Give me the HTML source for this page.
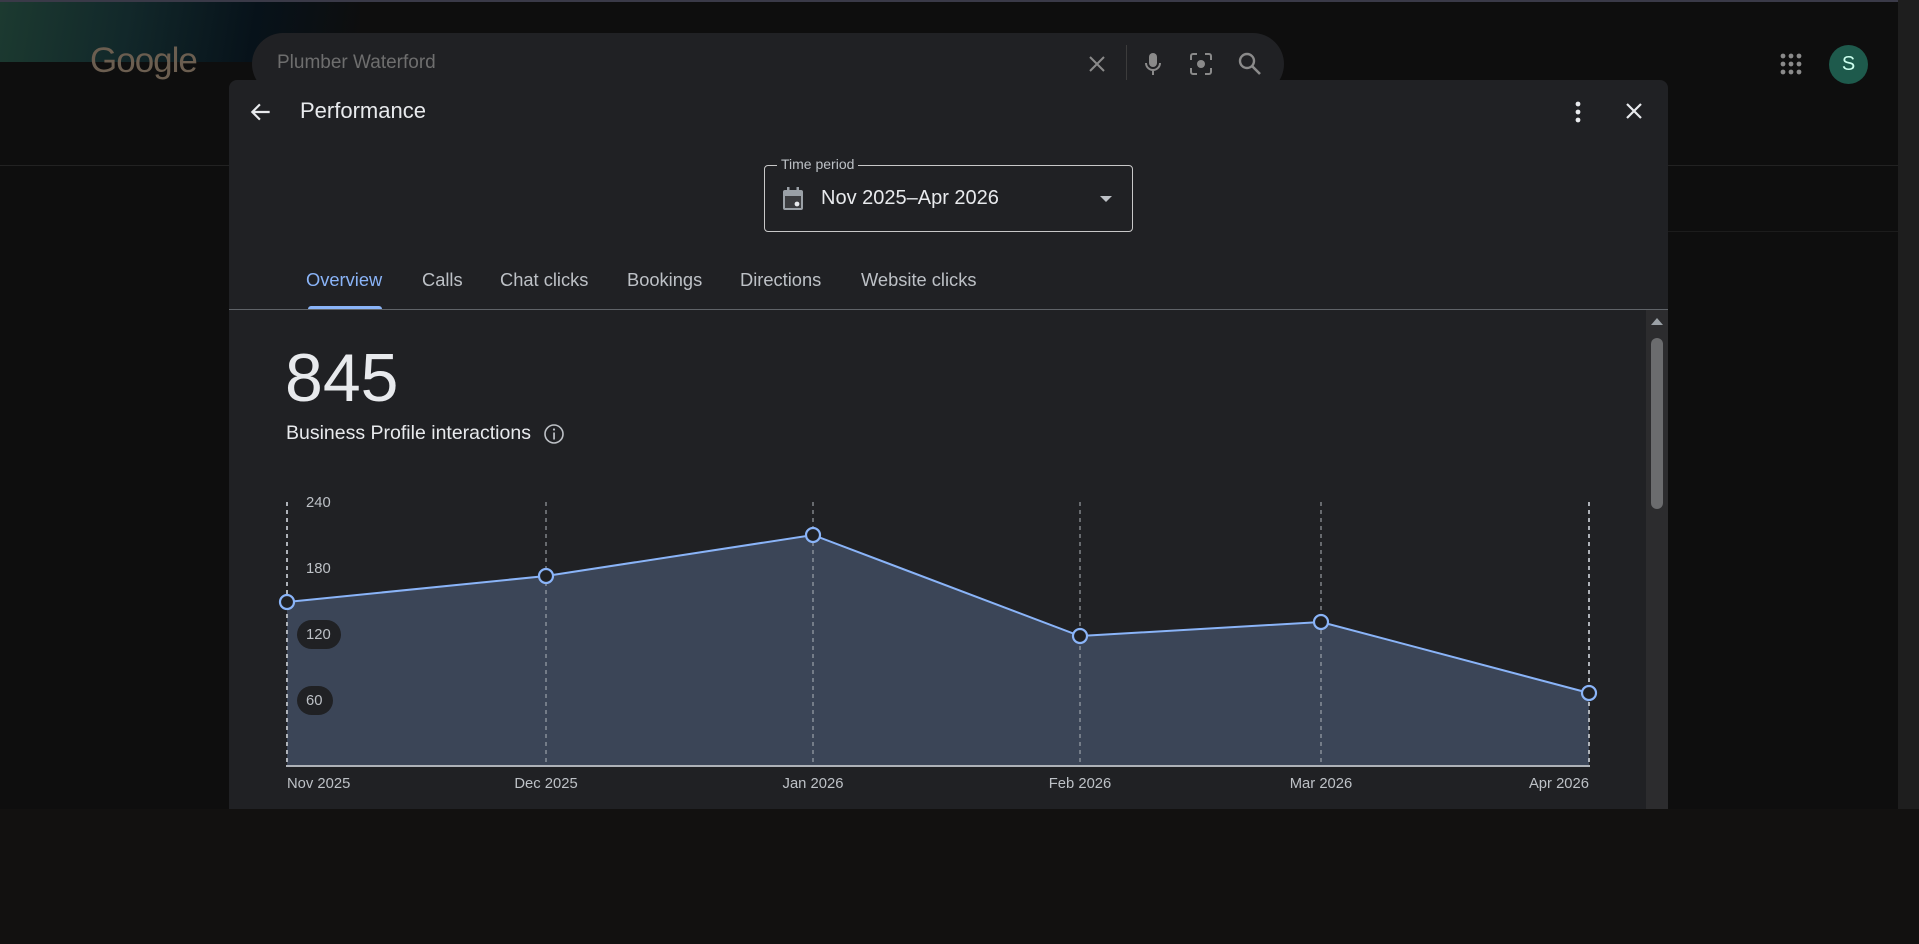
<!DOCTYPE html>
<html><head><meta charset="utf-8"><style>
*{margin:0;padding:0;box-sizing:border-box}
body{width:1919px;height:944px;background:#121110;overflow:hidden;position:relative;font-family:"Liberation Sans",Arial,sans-serif}
.top{position:absolute;left:0;top:0;width:1919px;height:809px;background:#0e0e0e}
.glow{position:absolute;left:0;top:0;width:360px;height:62px;background:linear-gradient(100deg,#1c3a30 0%,#12282a 35%,#07121a 70%,#0e0e0e 100%);border-bottom-right-radius:60px 30px}
.topline{position:absolute;left:0;top:0;width:1919px;height:2px;background:#3a3a48}
.hline{position:absolute;left:0;top:165px;width:1919px;height:1px;background:#222}
.hline2{position:absolute;left:1668px;top:231px;width:230px;height:1px;background:#1c1c1c}
.logo{position:absolute;left:90px;top:41px;font-size:35px;color:#6b5e50;letter-spacing:-1px}
.search{position:absolute;left:252px;top:33px;width:1032px;height:62px;border-radius:31px;background:#202124}
.search span{position:absolute;left:25px;top:19px;font-size:19px;color:#6e6e6e}
.sbar{position:absolute;left:1898px;top:0;width:21px;height:809px;background:#1e1e1e}
.avatar{position:absolute;left:1829px;top:45px;width:39px;height:39px;border-radius:50%;background:#1e5a4c;color:#cfe;font-size:20px;text-align:center;line-height:39px}
.modal{position:absolute;left:229px;top:80px;width:1439px;height:729px;background:#202124;border-radius:8px 8px 0 0;overflow:hidden}
.title{position:absolute;left:71px;top:18px;font-size:22px;color:#e8eaed}
.tp{position:absolute;left:535px;top:85px;width:369px;height:67px;border:1px solid #c8c8c8;border-radius:4px}
.tpl{position:absolute;left:12px;top:-10px;background:#202124;padding:0 4px;font-size:14px;color:#bdc1c6}
.tpv{position:absolute;left:56px;top:21px;font-size:20px;color:#e8eaed}
.tabs{position:absolute;top:189px;left:0;font-size:18.3px;color:#bdc1c6}
.tabs span{position:absolute;white-space:nowrap}
.ul{position:absolute;left:79px;top:226px;width:74px;height:3px;background:#8ab4f8;border-radius:3px 3px 0 0}
.div{position:absolute;left:0;top:229px;width:1439px;height:1px;background:#5f6368}
.big{position:absolute;left:56px;top:259px;font-size:68px;color:#e8eaed}
.sub{position:absolute;left:57px;top:342px;font-size:19.5px;color:#e8eaed}
.msb{position:absolute;left:1417px;top:230px;width:22px;height:499px;background:#2c2c2e}
.thumb{position:absolute;left:1422px;top:258px;width:12px;height:171px;background:#6b6c6e;border-radius:6px}
</style></head><body>
<div class="top"></div>
<div class="glow"></div>
<div class="topline"></div>
<div class="hline"></div><div class="hline2"></div>
<div class="logo">Google</div>
<div class="search"><span>Plumber Waterford</span>
<svg style="position:absolute;left:833px;top:19px" width="24" height="24" viewBox="0 0 24 24"><path d="M5 5L19 19M19 5L5 19" stroke="#8a8a8a" stroke-width="2"/></svg>
<div style="position:absolute;left:874px;top:12px;width:1px;height:38px;background:#3c3c3c"></div>
<svg style="position:absolute;left:889px;top:17px" width="24" height="28" viewBox="0 0 24 28"><rect x="8" y="3" width="8" height="14" rx="4" fill="#8a8a8a"/><path d="M5 13a7 7 0 0 0 14 0M12 20v5" stroke="#8a8a8a" stroke-width="2" fill="none"/></svg>
<svg style="position:absolute;left:936px;top:18px" width="26" height="26" viewBox="0 0 26 26"><path d="M3 9V5a2 2 0 0 1 2-2h4M17 3h4a2 2 0 0 1 2 2v4M23 17v4a2 2 0 0 1-2 2h-4M9 23H5a2 2 0 0 1-2-2v-4" stroke="#8a8a8a" stroke-width="2" fill="none"/><circle cx="13" cy="13" r="4" fill="#8a8a8a"/></svg>
<svg style="position:absolute;left:985px;top:18px" width="26" height="26" viewBox="0 0 26 26"><circle cx="10" cy="10" r="7" stroke="#8a8a8a" stroke-width="2.4" fill="none"/><path d="M15 15L23 23" stroke="#8a8a8a" stroke-width="2.6"/></svg>
</div>
<svg style="position:absolute;left:1780px;top:53px" width="22" height="22" viewBox="0 0 22 22" fill="#8a8a8a"><circle cx="3" cy="3" r="2.4"/><circle cx="11" cy="3" r="2.4"/><circle cx="19" cy="3" r="2.4"/><circle cx="3" cy="11" r="2.4"/><circle cx="11" cy="11" r="2.4"/><circle cx="19" cy="11" r="2.4"/><circle cx="3" cy="19" r="2.4"/><circle cx="11" cy="19" r="2.4"/><circle cx="19" cy="19" r="2.4"/></svg>
<div class="avatar">S</div>
<div class="sbar"></div>
<div class="modal">
<svg style="position:absolute;left:19px;top:19px" width="26" height="26" viewBox="0 0 24 24"><path d="M20 12H5M11 5L4 12L11 19" stroke="#e8eaed" stroke-width="2" fill="none"/></svg>
<div class="title">Performance</div>
<svg style="position:absolute;left:1338px;top:20px" width="22" height="24" viewBox="0 0 22 24" fill="#e8eaed"><circle cx="11" cy="4" r="2.4"/><circle cx="11" cy="12" r="2.4"/><circle cx="11" cy="20" r="2.4"/></svg>
<svg style="position:absolute;left:1393px;top:19px" width="24" height="24" viewBox="0 0 24 24"><path d="M5 5L19 19M19 5L5 19" stroke="#e8eaed" stroke-width="2.2"/></svg>
<div class="tp"><div class="tpl">Time period</div>
<svg style="position:absolute;left:16px;top:20px" width="24" height="26" viewBox="0 0 24 26"><rect x="2" y="4" width="20" height="20" rx="2" fill="#9aa0a6"/><rect x="6" y="1" width="2.5" height="5" fill="#9aa0a6"/><rect x="15.5" y="1" width="2.5" height="5" fill="#9aa0a6"/><rect x="4" y="10" width="16" height="12" fill="#3b3c3f"/><circle cx="16" cy="18" r="2.4" fill="#e8eaed"/></svg>
<div class="tpv">Nov 2025–Apr 2026</div>
<svg style="position:absolute;left:334px;top:29px" width="14" height="8" viewBox="0 0 14 8"><path d="M1 1H13L7 7Z" fill="#bdc1c6"/></svg>
</div>
<div class="tabs">
<span style="left:77px;color:#8ab4f8">Overview</span>
<span style="left:193px">Calls</span>
<span style="left:271px">Chat clicks</span>
<span style="left:398px">Bookings</span>
<span style="left:511px">Directions</span>
<span style="left:632px">Website clicks</span>
</div>
<div class="ul"></div>
<div class="div"></div>
<div class="big">845</div>
<div class="sub">Business Profile interactions</div>
<svg style="position:absolute;left:314px;top:343px" width="22" height="22" viewBox="0 0 22 22"><circle cx="11" cy="11" r="9" stroke="#bdc1c6" stroke-width="1.6" fill="none"/><rect x="10.2" y="9.5" width="1.7" height="7" fill="#bdc1c6"/><circle cx="11" cy="6.5" r="1.1" fill="#bdc1c6"/></svg>
<svg style="position:absolute;left:0;top:0" width="1417" height="729" viewBox="229 80 1417 729">
<path d="M287 602L546 576L813 535L1080 636L1321 622L1589 693L1589 766L287 766Z" fill="#3b4557"/>
<g stroke="#aeb2b8" stroke-width="1" stroke-dasharray="4 4">
<line x1="287" y1="502" x2="287" y2="766" stroke-width="2"/>
<line x1="546" y1="502" x2="546" y2="766"/><line x1="813" y1="502" x2="813" y2="766"/><line x1="1080" y1="502" x2="1080" y2="766"/><line x1="1321" y1="502" x2="1321" y2="766"/>
<line x1="1589" y1="502" x2="1589" y2="766" stroke-width="2"/>
</g>
<line x1="286" y1="766" x2="1590" y2="766" stroke="#aeb2b8" stroke-width="2"/>
<path d="M287 602L546 576L813 535L1080 636L1321 622L1589 693" stroke="#8ab4f8" stroke-width="2" fill="none"/>
<g fill="#202124" stroke="#8ab4f8" stroke-width="2.2">
<circle cx="287" cy="602" r="7"/><circle cx="546" cy="576" r="7"/><circle cx="813" cy="535" r="7"/><circle cx="1080" cy="636" r="7"/><circle cx="1321" cy="622" r="7"/><circle cx="1589" cy="693" r="7"/></g>
<rect x="297" y="620" width="44" height="29" rx="14.5" fill="#202124"/>
<rect x="297" y="686" width="36" height="29" rx="14.5" fill="#202124"/>
<g font-family="Liberation Sans, Arial, sans-serif" font-size="14.8" fill="#bdc1c6">
<text x="306" y="507">240</text><text x="306" y="573">180</text><text x="306" y="639">120</text><text x="306" y="705">60</text>
<text x="287" y="788">Nov 2025</text>
<text x="546" y="788" text-anchor="middle">Dec 2025</text>
<text x="813" y="788" text-anchor="middle">Jan 2026</text>
<text x="1080" y="788" text-anchor="middle">Feb 2026</text>
<text x="1321" y="788" text-anchor="middle">Mar 2026</text>
<text x="1589" y="788" text-anchor="end">Apr 2026</text>
</g>
</svg>
<div class="msb"></div>
<svg style="position:absolute;left:1421px;top:236px" width="14" height="10" viewBox="0 0 14 10"><path d="M1 9L7 2L13 9Z" fill="#9aa0a6"/></svg>
<div class="thumb"></div>
</div>
</body></html>
